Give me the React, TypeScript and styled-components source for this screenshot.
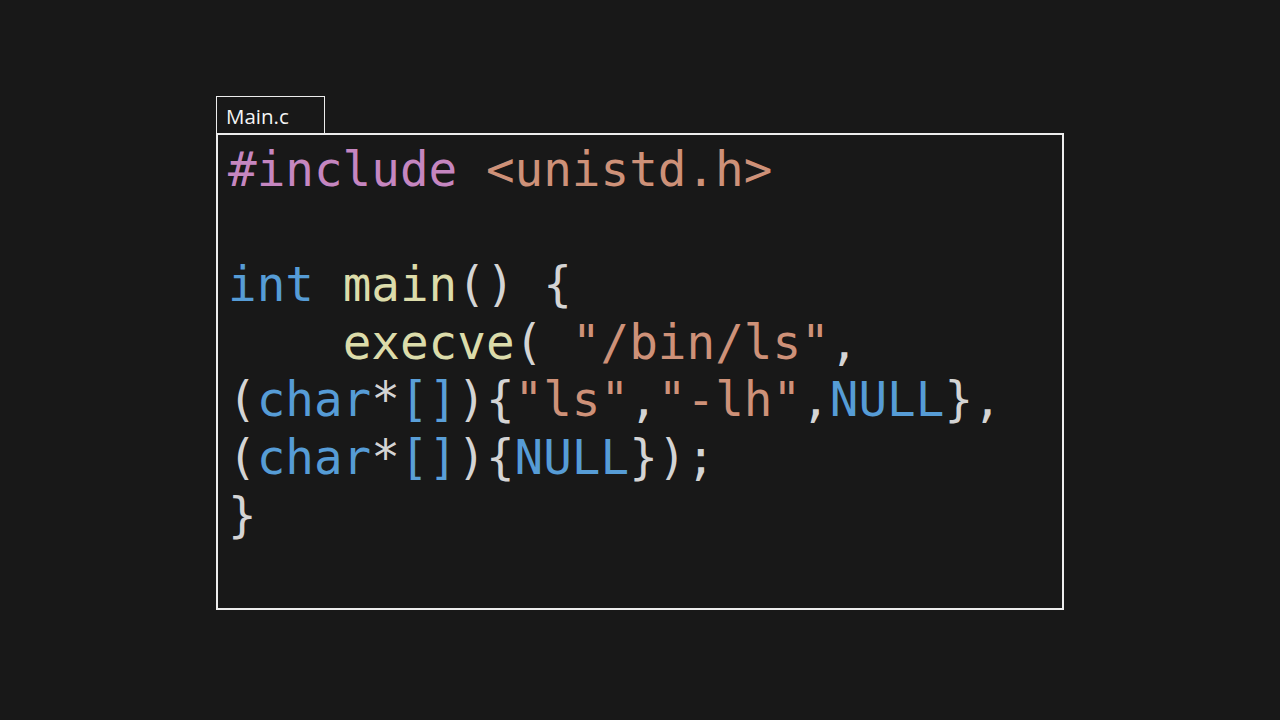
import React from "react";
import styled, { createGlobalStyle } from "styled-components";

const Global = createGlobalStyle`
  html, body { margin: 0; padding: 0; background: #181818; }
  body { width: 1280px; height: 720px; overflow: hidden; }
`;

const Page = styled.div`
  width: 1280px;
  height: 720px;
  background: #181818;
  padding: 96px 0 0 216px;
  box-sizing: border-box;
  display: flex;
  flex-direction: column;
  align-items: flex-start;
`;

const Tab = styled.div`
  width: 109px;
  height: 38px;
  box-sizing: border-box;
  border: 1.5px solid #ececec;
  border-bottom: none;
  color: #f4f4f4;
  font-family: "Open Sans", "Noto Sans", sans-serif;
  font-size: 20.5px;
  line-height: 39px;
  padding-left: 9px;
`;

const Editor = styled.div`
  width: 848px;
  height: 477px;
  box-sizing: border-box;
  border: 2px solid #ececec;
  padding: 6px 0 0 10px;
  margin-top: -1px;
`;

const Code = styled.pre`
  margin: 0;
  font-family: "DejaVu Sans Mono", "Liberation Mono", monospace;
  font-size: 47.6px;
  line-height: 57.6px;
  color: #d4d4d4;
  white-space: pre;
`;

type Kind = "kw" | "type" | "fn" | "str" | "pp" | "p" | "br";

const colors: Record<Kind, string> = {
  pp: "#c586c0",
  str: "#ce9178",
  type: "#569cd6",
  kw: "#569cd6",
  fn: "#dcdcaa",
  p: "#d4d4d4",
  br: "#5a9fd8",
};

const Tok = styled.span<{ $k: Kind }>`
  color: ${(p) => colors[p.$k]};
`;

const lines: [Kind, string][][] = [
  [["pp", "#include"], ["p", " "], ["str", "<unistd.h>"]],
  [],
  [["type", "int"], ["p", " "], ["fn", "main"], ["p", "() {"]],
  [["p", "    "], ["fn", "execve"], ["p", "( "], ["str", "\"/bin/ls\""], ["p", ","]],
  [
    ["p", "("], ["type", "char"], ["p", "*"], ["br", "[]"], ["p", "){"],
    ["str", "\"ls\""], ["p", ","], ["str", "\"-lh\""], ["p", ","], ["kw", "NULL"], ["p", "},"],
  ],
  [["p", "("], ["type", "char"], ["p", "*"], ["br", "[]"], ["p", "){"], ["kw", "NULL"], ["p", "});"]],
  [["p", "}"]],
];

export default function App() {
  return (
    <>
      <Global />
      <Page>
        <Tab>Main.c</Tab>
        <Editor>
          <Code>
            {lines.map((line, i) => (
              <React.Fragment key={i}>
                {line.map(([k, t], j) => (
                  <Tok key={j} $k={k}>{t}</Tok>
                ))}
                {"\n"}
              </React.Fragment>
            ))}
          </Code>
        </Editor>
      </Page>
    </>
  );
}
